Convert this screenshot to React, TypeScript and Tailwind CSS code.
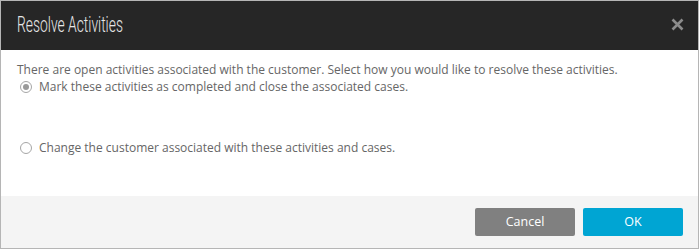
import React from "react";

export default function App() {
  return (
    <div className="w-[699px] h-[249px] border border-[#b5b5b5] flex flex-col bg-white">
      <div className="h-[49px] shrink-0 bg-[#262626] flex items-center justify-between pl-[16px] pr-[14px]">
        <div className="text-[22px] leading-none text-[#e6e6e6] font-light origin-left scale-x-[0.63] whitespace-nowrap font-['Roboto',sans-serif] mt-[-1px]">
          Resolve Activities
        </div>
        <svg width="13" height="13" viewBox="0 0 13 13" className="mt-[-2px]">
          <path d="M1.5 1.5 L11.5 11.5 M11.5 1.5 L1.5 11.5" stroke="#8c8c8c" strokeWidth="2.6" strokeLinecap="butt" />
        </svg>
      </div>
      <div className="flex-1 pl-[16px] pt-[12px] font-['Open_Sans',sans-serif] text-[12px] leading-[16px] text-[#666666]">
        <div>There are open activities associated with the customer. Select how you would like to resolve these activities.</div>
        <label className="flex items-center gap-[7px] ml-[3px] mt-[1px]">
          <span className="w-[12px] h-[12px] rounded-full border border-[#a6a6a6] flex items-center justify-center">
            <span className="w-[6px] h-[6px] rounded-full bg-[#9a9a9a]" />
          </span>
          <span>Mark these activities as completed and close the associated cases.</span>
        </label>
        <label className="flex items-center gap-[7px] ml-[3px] mt-[45px]">
          <span className="w-[12px] h-[12px] rounded-full border border-[#a6a6a6]" />
          <span>Change the customer associated with these activities and cases.</span>
        </label>
      </div>
      <div className="h-[52px] shrink-0 bg-[#f4f4f4] flex items-center justify-end gap-[8px] pr-[15px] font-['Open_Sans',sans-serif] text-[12.5px] text-white">
        <button className="w-[100px] h-[28px] rounded-[2px] bg-[#808080] flex items-center justify-center">Cancel</button>
        <button className="w-[100px] h-[28px] rounded-[2px] bg-[#00a5d3] flex items-center justify-center">OK</button>
      </div>
    </div>
  );
}
